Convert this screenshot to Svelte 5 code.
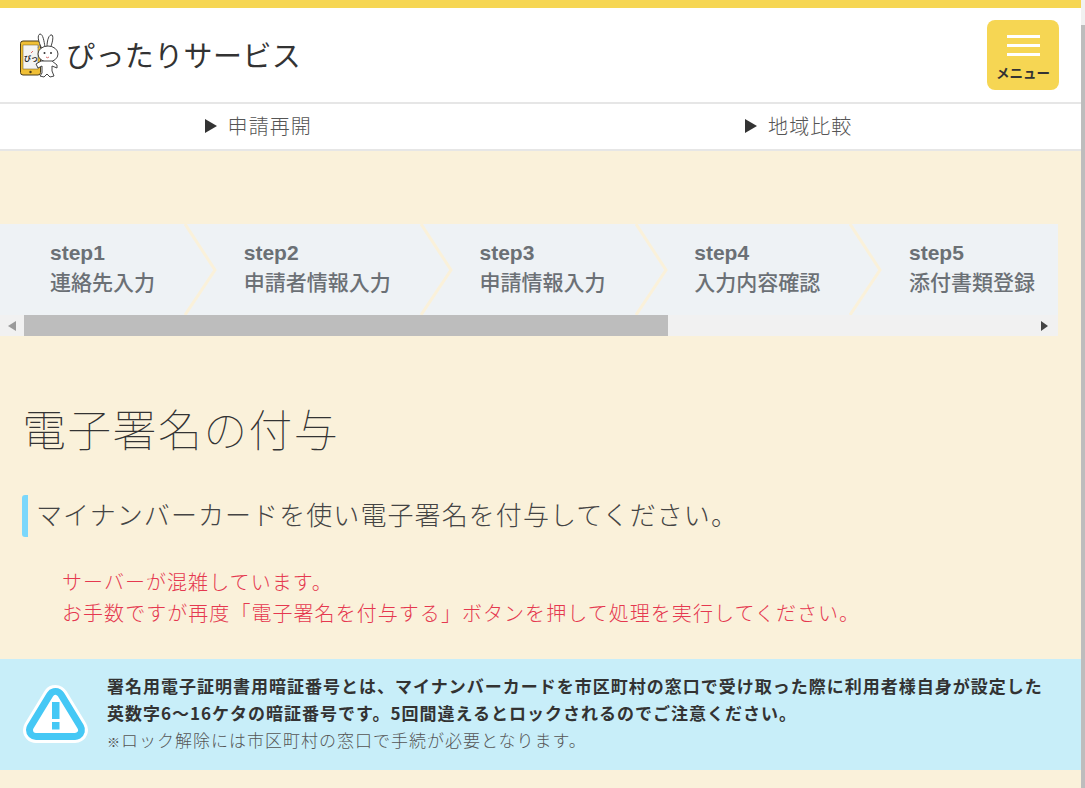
<script lang="ts">
	const steps = [
		{ name: 'step1', label: '連絡先入力' },
		{ name: 'step2', label: '申請者情報入力' },
		{ name: 'step3', label: '申請情報入力' },
		{ name: 'step4', label: '入力内容確認' },
		{ name: 'step5', label: '添付書類登録' }
	];

	const navLinks = ['申請再開', '地域比較'];
</script>

<div class="page">
	<main>
		<header>
			<a class="logo" href="#top">
				<svg width="40" height="46" viewBox="0 0 40 46" aria-hidden="true">
					<rect x="1.5" y="8" width="20" height="34" rx="2.5" fill="#f0bf35" stroke="#4a3c1a" stroke-width="1" />
					<rect x="4" y="12" width="15" height="24" fill="#f4f4f2" stroke="#6a5a2a" stroke-width=".5" />
					<circle cx="11.5" cy="39" r="1.2" fill="#4a3c1a" />
					<text x="5" y="28" class="logo-mark">ぴっ</text>
					<path d="M12 20 l2 -2" stroke="#e06a6a" stroke-width="1" />
					<path d="M19 15 l3 -6" stroke="#888" stroke-width="1" />
					<path d="M23 16 C19 8 18 2 21 1 C24 1 25 8 26 14 M28 14 C28 7 30 1 33 2 C35 4 33 11 31 16" fill="#fff" stroke="#444" stroke-width="1" />
					<ellipse cx="29" cy="21" rx="10" ry="8" fill="#fff" stroke="#444" stroke-width="1" />
					<circle cx="25.5" cy="20" r="1" fill="#333" />
					<circle cx="32" cy="20" r="1" fill="#333" />
					<path d="M27 24 q1.5 1.5 3 0" fill="none" stroke="#c44" stroke-width=".8" />
					<path d="M22 28 L17 31 L19 35 L23 33 L23 40 L21 43 L25 44 L28 41 L31 44 L35 43 L33 38 L33 33 L38 35 L38 32 L33 28 Z" fill="#fff" stroke="#444" stroke-width="1" stroke-linejoin="round" />
				</svg>
				<span class="logo-text">ぴったりサービス</span>
			</a>
			<button class="menu" type="button">
				<span class="bars"><i></i><i></i><i></i></span>
				<span class="menu-label">メニュー</span>
			</button>
		</header>

		<nav>
			{#each navLinks as link}
				<a href="#top"><span class="tri"></span>{link}</a>
			{/each}
		</nav>

		<section class="steps">
			<ol>
				{#each steps as step}
					<li>
						<b>{step.name}</b>
						<span>{step.label}</span>
						<svg class="chevron" width="34" height="91" viewBox="0 0 34 91" aria-hidden="true">
							<polyline points="1,0 31,46 1,91" fill="none" stroke="#faf1da" stroke-width="3" />
						</svg>
					</li>
				{/each}
			</ol>
			<div class="hscroll">
				<div class="arrow left"></div>
				<div class="thumb"></div>
				<div class="arrow right"></div>
			</div>
		</section>

		<h1>電子署名の付与</h1>
		<h2>マイナンバーカードを使い電子署名を付与してください。</h2>

		<p class="error">
			サーバーが混雑しています。<br />
			お手数ですが再度「電子署名を付与する」ボタンを押して処理を実行してください。
		</p>

		<aside class="notice">
			<svg width="66" height="60" viewBox="0 0 66 60" aria-hidden="true">
				<path d="M32.5 14 L52 46 L13 46 Z" fill="#fff" stroke="#fff" stroke-width="26" stroke-linejoin="round" />
				<path d="M32.5 14 L52 46 L13 46 Z" fill="#45c8f5" stroke="#45c8f5" stroke-width="20" stroke-linejoin="round" />
				<path d="M32.5 14 L52 46 L13 46 Z" fill="#fff" stroke="#fff" stroke-width="6" stroke-linejoin="round" />
				<rect x="29" y="18" width="7.5" height="17" fill="#45c8f5" />
				<rect x="29" y="38" width="7.5" height="7.5" fill="#45c8f5" />
			</svg>
			<div>
				<strong>署名用電子証明書用暗証番号とは、マイナンバーカードを市区町村の窓口で受け取った際に利用者様自身が設定した英数字6～16ケタの暗証番号です。5回間違えるとロックされるのでご注意ください。</strong>
				<small><em>※</em>ロック解除には市区町村の窓口で手続が必要となります。</small>
			</div>
		</aside>
	</main>
	<div class="vscroll"><div></div></div>
</div>

<style>
	:global(body) {
		background: #faf1da;
		overflow: hidden;
	}

	.page {
		display: flex;
		height: 788px;
		overflow: hidden;
		font-family: 'Noto Sans CJK JP', 'Noto Sans', sans-serif;
		color: #333;
	}

	main {
		flex: 1;
		min-width: 0;
	}

	.vscroll {
		width: 4px;
		padding-top: 25px;
		background: #f1f1f1;
	}
	.vscroll div {
		height: 100%;
		background: #bdbdbd;
	}

	header {
		display: flex;
		justify-content: space-between;
		align-items: center;
		height: 94px;
		padding: 0 22px 0 19px;
		background: #fff;
		border-top: 8px solid #f6d653;
		border-bottom: 2px solid #e6e6e6;
	}

	.logo {
		display: flex;
		align-items: center;
		gap: 7px;
		color: #333;
		text-decoration: none;
	}
	.logo svg {
		display: block;
		margin-top: 2px;
	}
	.logo-mark {
		font-size: 7px;
		font-weight: 700;
		fill: #222;
	}
	.logo-text {
		margin-top: -2px;
		font-size: 29px;
		line-height: 40px;
		font-weight: 400;
		letter-spacing: 0.4px;
	}

	.menu {
		display: flex;
		flex-direction: column;
		align-items: center;
		width: 72px;
		height: 70px;
		padding: 15px 0 0;
		border: 0;
		border-radius: 8px;
		background: #f6d653;
		font-family: inherit;
		color: #333;
	}
	.bars {
		display: flex;
		flex-direction: column;
		gap: 6px;
	}
	.bars i {
		display: block;
		width: 33px;
		height: 3px;
		background: #fff;
	}
	.menu-label {
		margin-top: 6px;
		font-size: 13.5px;
		line-height: 20px;
		font-weight: 700;
	}

	nav {
		display: grid;
		grid-template-columns: 1fr 1fr;
		height: 45px;
		background: #fff;
		border-bottom: 2px solid #e6e6e6;
	}
	nav a {
		display: flex;
		align-items: center;
		justify-content: center;
		padding: 0 24px 2px 0;
		font-size: 20px;
		font-weight: 300;
		letter-spacing: 1.1px;
		color: #555;
		text-decoration: none;
	}
	.tri {
		width: 0;
		height: 0;
		margin-right: 11px;
		border-left: 12px solid #333;
		border-top: 7px solid transparent;
		border-bottom: 7px solid transparent;
	}

	.steps {
		width: 1058px;
		margin-top: 73px;
		overflow: hidden;
	}
	ol {
		display: flex;
		height: 91px;
		margin: 0;
		padding: 0;
		list-style: none;
		background: #eef2f5;
		overflow: hidden;
	}
	li {
		position: relative;
		flex: none;
		display: flex;
		flex-direction: column;
		justify-content: center;
		padding: 0 30px 5px 58.75px;
		color: #6b7075;
	}
	li:first-child {
		padding-left: 50px;
	}
	li b {
		margin-bottom: -2px;
		font-family: 'Liberation Sans', sans-serif;
		font-size: 21px;
		line-height: 30px;
	}
	li span {
		font-size: 21px;
		line-height: 30px;
		font-weight: 500;
		white-space: nowrap;
	}
	.chevron {
		position: absolute;
		top: 0;
		left: 100%;
		margin-left: -1px;
		z-index: 1;
	}

	.hscroll {
		display: flex;
		align-items: center;
		height: 21px;
		background: #f1f1f1;
	}
	.thumb {
		width: 644px;
		height: 100%;
		background: #bdbdbd;
	}
	.arrow {
		flex: none;
		width: 0;
		height: 0;
		border-top: 5px solid transparent;
		border-bottom: 5px solid transparent;
	}
	.arrow.left {
		margin: 0 8px;
		border-right: 8px solid #9a9a9a;
	}
	.arrow.right {
		margin-left: auto;
		margin-right: 10px;
		border-left: 7px solid #444;
	}

	h1 {
		margin: 64px 0 0 22px;
		font-size: 44px;
		line-height: 56px;
		font-weight: 100;
		letter-spacing: 1.3px;
		color: #333;
	}

	h2 {
		margin: 39px 0 0 22px;
		padding-left: 8px;
		border-left: 6px solid #7ad7fb;
		border-radius: 3px;
		height: 42px;
		font-size: 26px;
		line-height: 38px;
		font-weight: 200;
		letter-spacing: 1.08px;
		color: #444;
		white-space: nowrap;
	}

	.error {
		margin: 29px 0 0 62px;
		font-size: 20px;
		line-height: 31px;
		font-weight: 300;
		letter-spacing: 1.05px;
		color: #e5384f;
		white-space: nowrap;
	}

	.notice {
		display: flex;
		align-items: center;
		gap: 18px;
		height: 111px;
		margin-top: 31px;
		padding: 0 38px 2px 23px;
		box-sizing: border-box;
		background: #c8eef9;
	}
	.notice svg {
		flex: none;
	}
	.notice strong {
		display: block;
		font-size: 17px;
		line-height: 27px;
		font-weight: 700;
		letter-spacing: 1px;
		color: #333;
	}
	.notice small {
		display: block;
		font-size: 17px;
		line-height: 27px;
		font-weight: 300;
		letter-spacing: 1px;
		color: #555;
	}
	.notice em {
		font-style: normal;
		font-size: 13px;
	}
</style>
